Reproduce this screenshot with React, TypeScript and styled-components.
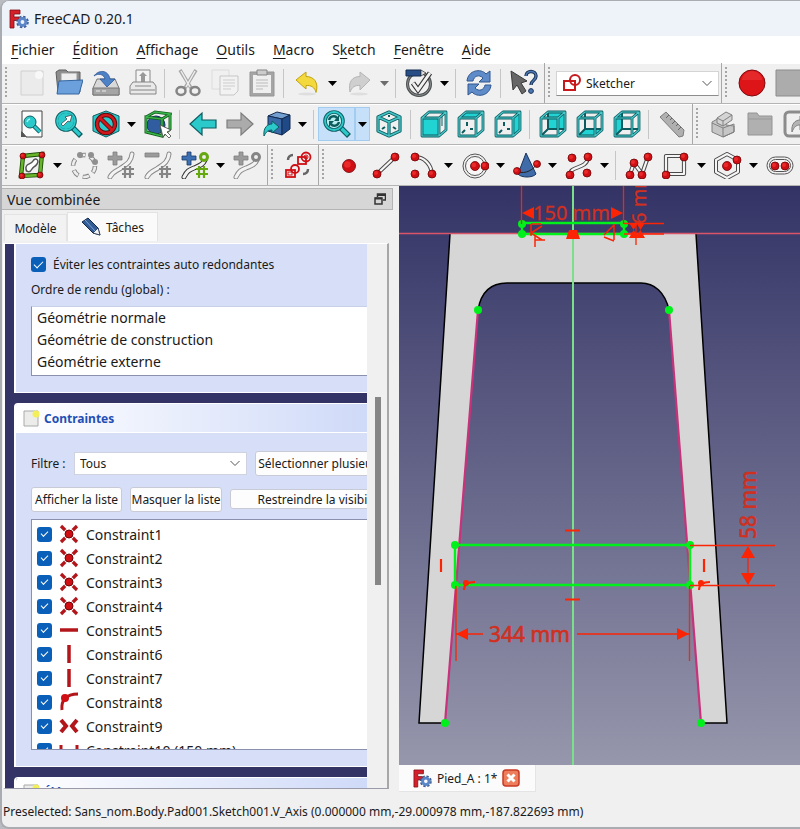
import React from "react";
import styled, { createGlobalStyle } from "styled-components";

const GlobalStyle = createGlobalStyle`
  * { box-sizing: border-box; }
  body { margin: 0; background: #b9bcc0; }
  body, button, select, input { font-family: "Noto Sans", "Open Sans", sans-serif; color: #1a1a1a; }
  button { cursor: default; }
`;

const Window = styled.div`
  display: flex;
  flex-direction: column;
  height: 100vh;
  overflow: hidden;
  background: #f0f0f0;
  border: solid #a9acb0;
  border-width: 1px 0 2px 2px;
  border-radius: 9px 0 0 9px;
`;

const TitleBar = styled.header`
  display: flex;
  align-items: center;
  gap: 5px;
  height: 35px;
  flex: none;
  padding-left: 7px;
  background: #eef3fa;
`;

const TitleText = styled.h1`
  margin: 0;
  font-size: 14px;
  font-weight: 400;
`;

const MenuBar = styled.nav`
  display: flex;
  align-items: center;
  height: 27px;
  flex: none;
  background: #fff;
`;

const MenuButton = styled.button`
  border: 0;
  background: none;
  padding: 0 9px;
  font-size: 14px;
  line-height: 26px;
  white-space: nowrap;
`;

const Mnemonic = styled.span`
  text-decoration: underline;
  text-decoration-skip-ink: none;
  text-underline-offset: 3px;
`;

const ToolRow = styled.div`
  display: flex;
  flex: none;
  height: 41px;
  overflow: hidden;
  border-bottom: 1px solid #b4b4b4;
  box-shadow: inset 0 1px #fff;
`;

const ToolBar = styled.div`
  display: flex;
  flex: none;
  align-items: center;
  padding: 0 2px 0 3px;
  & + & { border-left: 1px solid #a8a8a8; }
`;

const Grip = styled.span`
  flex: none;
  width: 3px;
  height: 32px;
  margin-right: 5px;
  background: radial-gradient(circle at 1px 1px, #a5a5a5 1px, transparent 1px) 0 0 / 3px 4px;
`;

const Separator = styled.span`
  flex: none;
  width: 1px;
  height: 29px;
  margin: 0 4px 0 3px;
  background: #c6c6c6;
`;

const ToolButton = styled.button<{ $on?: boolean }>`
  display: grid;
  place-items: center;
  flex: none;
  width: 37px;
  height: 34px;
  padding: 0;
  border: 1px solid ${(p) => (p.$on ? "#a3cdf0" : "transparent")};
  background: ${(p) => (p.$on ? "#c5e0f8" : "none")};
`;

const CaretButton = styled(ToolButton)`
  width: 15px;
`;

const Svg = styled.svg<{ $size?: number }>`
  display: block;
  flex: none;
  width: ${(p) => p.$size ?? 28}px;
  height: ${(p) => p.$size ?? 28}px;
`;

const WorkbenchBox = styled.label`
  display: flex;
  align-items: center;
  gap: 4px;
  width: 163px;
  height: 25px;
  padding: 0 5px;
  background: #fff;
  border: 1px solid #d4d4d4;
  border-bottom-color: #8d8d8d;
`;

const BareSelect = styled.select`
  flex: 1;
  min-width: 0;
  appearance: none;
  border: 0;
  background: transparent;
  padding: 0;
  font-size: 12px;
`;

const Main = styled.main`
  display: flex;
  flex: 1;
  min-height: 0;
`;

const Dock = styled.aside`
  display: flex;
  flex-direction: column;
  flex: none;
  width: 397px;
  padding: 2px 6px 10px 0;
  min-height: 0;
`;

const DockTitle = styled.div`
  display: flex;
  align-items: center;
  justify-content: space-between;
  flex: none;
  height: 22px;
  padding: 0 6px 0 5px;
  background: #d6d6d6;
  border: 1px solid #b4b4b4;
  border-left: 0;
`;

const DockName = styled.h2`
  margin: 0;
  font-size: 14px;
  font-weight: 400;
`;

const PlainButton = styled.button`
  display: grid;
  padding: 0;
  border: 0;
  background: none;
`;

const Tabs = styled.div`
  display: flex;
  align-items: flex-end;
  flex: none;
  height: 33px;
  padding: 0 0 2px 2px;
`;

const Tab = styled.button<{ $active?: boolean }>`
  display: flex;
  align-items: center;
  justify-content: center;
  gap: 5px;
  width: ${(p) => (p.$active ? 91 : 63)}px;
  height: ${(p) => (p.$active ? 29 : 27)}px;
  padding: 0;
  border: 1px solid #e3e3e3;
  border-bottom: 0;
  background: ${(p) => (p.$active ? "#fafafa" : "#f2f2f2")};
  font-size: 12px;
`;

const TaskArea = styled.div`
  display: flex;
  flex: 1;
  min-height: 0;
  margin: 0 4px 0 1px;
  border: solid #fff;
  border-width: 1px 0 0 2px;
  border-right: 2px solid #a7a7a7;
  border-bottom: 1px solid #9a9aa8;
  overflow: hidden;
`;

const TaskView = styled.div`
  flex: 1;
  min-width: 0;
  overflow: hidden;
  padding-left: 9px;
  background: #333366;
`;

const ScrollTrack = styled.div`
  flex: none;
  width: 20px;
  padding: 153px 6px 0 8px;
  background: #f0f0f0;
`;

const ScrollThumb = styled.div`
  height: 188px;
  background: #868686;
`;

const Group = styled.section<{ $rest?: boolean }>`
  width: 420px;
  margin-bottom: 10px;
  border: 1px solid #fff;
  border-left-width: 2px;
  background: #d6dff7;
  border-radius: ${(p) => (p.$rest ? "0" : "4px 4px 0 0")};
  border-top-width: ${(p) => (p.$rest ? 0 : 1)}px;
  overflow: hidden;
`;

const GroupHead = styled.h3`
  display: flex;
  align-items: center;
  gap: 4px;
  height: 29px;
  margin: 0;
  padding-left: 7px;
  border-bottom: 1px solid #fff;
  background: linear-gradient(90deg, #fff, #c6d3f7);
  color: #1f4fb5;
  font-size: 12px;
  font-weight: 700;
`;

const RenderBody = styled.div`
  padding: 12px 0 16px 15px;
`;

const CheckRow = styled.label`
  display: flex;
  align-items: center;
  gap: 7px;
  height: 17px;
  font-size: 12px;
`;

const Check = styled.input<{ $small?: boolean }>`
  appearance: none;
  display: grid;
  place-items: center;
  flex: none;
  width: 15px;
  height: 15px;
  margin: 0;
  border-radius: 3px;
  background: #0a5fb9;
  &:checked::after {
    content: "";
    width: ${(p) => (p.$small ? 6 : 8)}px;
    height: ${(p) => (p.$small ? 3 : 4)}px;
    border: solid #fff;
    border-width: 0 0 1px 1px;
    transform: translateY(-1px) rotate(-45deg);
  }
`;

const Caption = styled.div`
  margin-top: 8px;
  font-size: 12px;
  line-height: 17px;
`;

const ListFrame = styled.ul`
  list-style: none;
  margin: 8px 0 0;
  padding: 0 0 0 5px;
  background: #fff;
  border: 1px solid #8b90ad;
  font-size: 14px;
`;

const OrderList = styled(ListFrame)`
  height: 70px;
  border-top-color: #c9cfe6;
`;

const OrderItem = styled.li`
  line-height: 22px;
`;

const ConstraintList = styled(ListFrame)`
  height: 231px;
  padding-top: 2px;
  overflow: hidden;
`;

const ConstraintItem = styled.li`
  height: 24px;
`;

const ConstraintLabel = styled.label`
  display: flex;
  align-items: center;
  gap: 7px;
  height: 24px;
`;

const ConstraintBody = styled.div`
  padding: 18px 0 16px 15px;
`;

const FormRow = styled.div`
  display: flex;
  align-items: center;
  gap: 8px;
  height: 24px;
  & + & { margin-top: 12px; }
`;

const FilterLabel = styled.label`
  width: 35px;
  font-size: 12px;
  white-space: nowrap;
`;

const FilterBox = styled.span`
  display: flex;
  align-items: center;
  flex: none;
  width: 173px;
  height: 23px;
  padding: 0 5px;
  background: #fff;
  border: 1px solid #cfd3e0;
`;

const PushButton = styled.button<{ $width: number; $low?: boolean }>`
  flex: none;
  width: ${(p) => p.$width}px;
  height: ${(p) => (p.$low ? 20 : 25)}px;
  padding: 0;
  border: 1px solid #c8cbd6;
  border-radius: 3px;
  background: #fdfdfd;
  font-size: 12px;
  line-height: 17px;
  white-space: nowrap;
`;

const ViewColumn = styled.section`
  display: flex;
  flex-direction: column;
  flex: 1;
  min-width: 0;
`;

const Viewport = styled.div`
  flex: 1;
  min-height: 0;
  overflow: hidden;
  background: linear-gradient(#333366, #9696ac);
`;

const Drawing = styled.svg`
  display: block;
  width: 100%;
  height: 100%;
  font-family: "Noto Sans", sans-serif;
`;

const DocTabs = styled.div`
  display: flex;
  flex: none;
  height: 34px;
`;

const DocTab = styled.div`
  display: flex;
  align-items: center;
  gap: 5px;
  width: 137px;
  height: 27px;
  padding-left: 14px;
  background: #fbfbfb;
  border: solid #e4e4e4;
  border-width: 0 1px 1px 0;
  font-size: 12px;
`;

const StatusBar = styled.footer`
  flex: none;
  height: 28px;
  padding-left: 1px;
  font-size: 12px;
  line-height: 26px;
  white-space: nowrap;
`;

/* ---------- icons ---------- */

const TEAL = "#2cc9cb";
const DTEAL = "#0d5c60";
const RED = "#cf0f14";

const Icon = ({ children, size, box = 28 }: { children: React.ReactNode; size?: number; box?: number }) => (
  <Svg $size={size} viewBox={`0 0 ${box} ${box}`} fill="none" aria-hidden="true">{children}</Svg>
);

const Caret = ({ dim }: { dim?: boolean }) => (
  <Icon size={9} box={9}><path d="M0 2h9L4.500 7z" fill={dim ? "#6d6d6d" : "#000"} /></Icon>
);

const Chevron = () => (
  <Icon size={12} box={12}><path d="M1.500 4l4.500 4.500L10.500 4" stroke="#555" /></Icon>
);

const Dot = ({ x, y, r = 4 }: { x: number; y: number; r?: number }) => (
  <g>
    <circle cx={x} cy={y} r={r} fill={RED} stroke="#6d0508" strokeWidth=".8" />
    <circle cx={x - r / 4} cy={y - r / 4} r={r / 2} fill="#ea2a2a" />
  </g>
);

const Rail = ({ d, w = 4.2 }: { d: string; w?: number }) => (
  <g strokeLinecap="round" strokeLinejoin="round">
    <path d={d} stroke="#4a4a4a" strokeWidth={w} />
    <path d={d} stroke="#f5f5f5" strokeWidth={w - 2} />
  </g>
);

const Logo = ({ size }: { size: number }) => (
  <Icon size={size} box={20}>
    <path d="M1 1h10v4H5v3h5v3.500H5V19H1z" fill="#d5202a" stroke="#7c0c12" strokeWidth=".8" />
    <circle cx="13.500" cy="13" r="4.800" stroke="#3d5f96" strokeWidth="3" strokeDasharray="2.200 1.570" />
    <circle cx="13.500" cy="13" r="3.400" stroke="#5b86c7" strokeWidth="3" />
  </Icon>
);

const NewIcon = () => (
  <Icon><path d="M3 2h22v24H3z" fill="#ebebeb" stroke="#d0d0d0" /><circle cx="21" cy="6" r="4" fill="#f8f8f8" /></Icon>
);
const OpenIcon = () => (
  <Icon>
    <path d="M1 3l3-2h7l2 2h12v20H3z" fill="#8c8c8c" stroke="#5e5e5e" />
    <path d="M6 4h16v9H6z" fill="#eee" stroke="#999" />
    <path d="M4 12l24-1-4 14H2z" fill="#6ca0dc" stroke="#34659f" />
  </Icon>
);
const SaveIcon = () => (
  <Icon>
    <path d="M5 10h18l4 9v7H1v-7z" fill="#d9d9d9" stroke="#777" />
    <path d="M1 19h26v7H1z" fill="#a5a5a5" stroke="#777" />
    <path d="M4 22h4m2 0h4" stroke="#eee" />
    <path d="M2 7c4-6 14-7 16 3h5l-8 8-7-8h5C12 5 6 4 2 7z" fill="#4e82c6" stroke="#2c5796" strokeWidth=".8" />
  </Icon>
);
const PrintIcon = () => (
  <Icon>
    <path d="M7 1h14v13H7z" fill="#f4f4f4" stroke="#8a8a8a" />
    <path d="M14 3l4 4h-2v6h-4V7h-2z" fill="#999" />
    <path d="M4 13h20l3 4v8H1v-8z" fill="#e9e9e9" stroke="#858585" />
    <path d="M2 21h24M6 17h16" stroke="#858585" />
  </Icon>
);
const CutIcon = () => (
  <Icon>
    <path d="M6 1l11 18M22 1L11 19" stroke="#a8a8a8" strokeWidth="3.500" />
    <path d="M7 2l9 16M21 2l-9 16" stroke="#ededed" strokeWidth="1.500" />
    <ellipse cx="7" cy="22" rx="4.500" ry="4" stroke="#858585" strokeWidth="2.500" />
    <ellipse cx="21" cy="22" rx="4.500" ry="4" stroke="#858585" strokeWidth="2.500" />
  </Icon>
);
const CopyIcon = () => (
  <Icon>
    <path d="M1 1h17v19H1z" fill="#f0f0f0" stroke="#dcdcdc" />
    <path d="M9 7h18v15l-4 4H9z" fill="#f2f2f2" stroke="#c6c6c6" />
    <path d="M12 11h12m-12 3h12m-12 3h12m-12 3h8" stroke="#cdcdcd" />
  </Icon>
);
const PasteIcon = () => (
  <Icon>
    <path d="M2 3h24v24H2z" fill="#a5a5a5" stroke="#959595" />
    <path d="M5 6h18v18H5z" fill="#efefef" />
    <path d="M9 1h10v5H9z" fill="#ccc" stroke="#858585" />
    <path d="M8 11h12M8 14h12M8 17h12M8 20h7" stroke="#bbb" />
  </Icon>
);
const UndoIcon = ({ redo }: { redo?: boolean }) => (
  <Icon>
    <path
      d={redo ? "M25 11L15 3v4.500C7 7.500 3 13 5 23c2-5 5-7 10-6.500V21z" : "M3 11l10-8v4.500c8 0 13 6 10 16-1-5-5-7.500-10-7V20z"}
      fill={redo ? "#cfcfcf" : "#f4d93e"} stroke={redo ? "#b5b5b5" : "#c2a20c"}
    />
    <ellipse cx="14" cy="25" rx="9" ry="1.500" fill="#dedede" />
  </Icon>
);
const ValidateIcon = () => (
  <Icon>
    <circle cx="14" cy="15" r="11.500" stroke="#4b4f50" strokeWidth="3" />
    <circle cx="14" cy="15" r="11.500" stroke="#8c9192" strokeWidth="1" />
    <path d="M1 1h15v6H1z" fill="#274f86" stroke="#122c50" />
    <path d="M16 1l5 3-5 3z" fill="#ddd" stroke="#333" strokeWidth=".7" />
    <path d="M8 14l5 7L25 4" stroke="#333" strokeWidth="5" />
    <path d="M8 14l5 7L25 4" stroke="#f1f1f1" strokeWidth="3" />
  </Icon>
);
const RefreshIcon = () => (
  <Icon>
    <path d="M2 12C3 1 16-1 21 5l4-3v11H14l4-4c-4-4-9-2-10 3z" fill="#5f8cc9" stroke="#2f5790" />
    <path d="M26 16C25 27 12 29 7 23l-4 3V15h11l-4 4c4 4 9 2 10-3z" fill="#5f8cc9" stroke="#2f5790" />
  </Icon>
);
const WhatsIcon = () => (
  <Icon>
    <path d="M1 2l16 10-6 2 5 8-4 3-5-9-4 5z" fill="#666" stroke="#3b3b3b" />
    <path d="M16 7c0-6 10-6 10 0 0 5-5 4-5 9" stroke="#1d3557" strokeWidth="3.500" />
    <path d="M16 7c0-6 10-6 10 0 0 5-5 4-5 9" stroke="#4a78b5" strokeWidth="1.500" />
    <circle cx="21" cy="22" r="2.400" fill="#4a78b5" stroke="#1d3557" />
  </Icon>
);
const SketcherIcon = () => (
  <Icon size={20} box={20}>
    <rect x="2" y="8" width="11" height="9" stroke="#c8181c" strokeWidth="2" />
    <circle cx="13" cy="7" r="5" stroke="#c8181c" strokeWidth="2" />
  </Icon>
);
const RecordIcon = () => (
  <Icon><circle cx="14" cy="14" r="13" fill="#dd1519" stroke="#7e0b0e" /><path d="M4 11a10 9 0 0120 0" fill="#ee3b3b" opacity=".5" /></Icon>
);
const StopIcon = () => <Icon><path d="M1 1h26v26H1z" fill="#acacac" stroke="#8c8c8c" /></Icon>;

const FitAllIcon = () => (
  <Icon>
    <path d="M4 1h20v26H8l-4-5z" fill="#fbfbfb" stroke="#444" />
    <path d="M3 21l6 6H3z" fill="#555" />
    <path d="M15 15l7 7" stroke={DTEAL} strokeWidth="4.500" />
    <path d="M15 15l7 7" stroke={TEAL} strokeWidth="2.500" />
    <circle cx="12" cy="12" r="6" fill={TEAL} stroke={DTEAL} />
    <path d="M9 12a4 4 0 013-3" stroke="#a5f1f1" strokeWidth="1.500" />
  </Icon>
);
const Magnifier = ({ children }: { children: React.ReactNode }) => (
  <Icon>
    <path d="M17 17l9 9" stroke={DTEAL} strokeWidth="5.500" />
    <path d="M17 17l8 8" stroke={TEAL} strokeWidth="3.200" />
    <circle cx="11" cy="11" r="9" fill="#b9eeee" stroke={DTEAL} strokeWidth="3.600" />
    <circle cx="11" cy="11" r="9" stroke={TEAL} strokeWidth="1.800" />
    {children}
  </Icon>
);
const FitSelIcon = () => (
  <Magnifier>
    <circle cx="11" cy="11" r="8" fill={TEAL} />
    <path d="M6 14l6-5-2-2 7-2-2 7-2-1-5 5z" fill="#fff" stroke="#333" strokeWidth=".7" />
  </Magnifier>
);
const SyncIcon = () => (
  <Magnifier>
    <path d="M6 10c1-4 6-5 8-2M16 12c-1 4-6 5-8 2" stroke={DTEAL} strokeWidth="2.400" />
    <path d="M16 5v6h-5zM6 17v-6h5z" fill={DTEAL} />
  </Magnifier>
);
const StyleIcon = () => (
  <Icon>
    <path d="M14 1l13 5v15l-13 6-13-6V6z" fill={TEAL} stroke={DTEAL} />
    <circle cx="14" cy="14" r="9" stroke="#5d0a0c" strokeWidth="4.400" />
    <path d="M8 8l12 12" stroke="#5d0a0c" strokeWidth="4.400" />
    <circle cx="14" cy="14" r="9" stroke="#d0181c" strokeWidth="2.600" />
    <path d="M8 8l12 12" stroke="#d0181c" strokeWidth="2.600" />
  </Icon>
);
const BoxSelectIcon = () => (
  <Icon>
    <circle cx="12" cy="15" r="9" fill="#2f5da0" stroke="#12305c" />
    <g stroke="#145c1d" strokeWidth="3"><path d="M2 7l16 2v17L2 22zM2 7l9-5 15 2-8 5M26 4v15l-8 7" /></g>
    <g stroke="#38b54a" strokeWidth="1.400"><path d="M2 7l16 2v17L2 22zM2 7l9-5 15 2-8 5M26 4v15l-8 7" /></g>
    <path d="M16 15l11 5-4 2 4 4-2 2-4-4-2 3z" fill="#fff" stroke="#444" strokeWidth=".8" />
  </Icon>
);
const ArrowIcon = ({ right }: { right?: boolean }) => (
  <Icon>
    <path
      d={right ? "M27 14L15 3v7H1v8h14v7z" : "M1 14L13 3v7h14v8H13v7z"}
      fill={right ? "#ababab" : TEAL} stroke={right ? "#7d7d7d" : DTEAL} strokeWidth="1.200"
    />
  </Icon>
);
const LinkIcon = () => (
  <Icon>
    <path d="M5 6l9-4 13 3-8 4z" fill="#729fcf" stroke="#12284c" />
    <path d="M5 6l14 3v16L5 21z" fill="#3a69a8" stroke="#12284c" />
    <path d="M19 9l8-4v14l-8 6z" fill="#204a87" stroke="#12284c" />
    <path d="M1 26c-1-9 4-12 8-12v-3l7 6-7 6v-3c-4 0-6 2-8 6z" fill={TEAL} stroke={DTEAL} />
  </Icon>
);
const IsoIcon = () => {
  const d = "M14 2l11 5v14l-11 5L3 21V7zM3 7l11 5 11-5M14 12v14";
  return (
    <Icon>
      <path d={d} stroke={DTEAL} strokeWidth="3.200" strokeLinejoin="round" />
      <path d={d} stroke="#45c4c6" strokeWidth="1.400" strokeLinejoin="round" />
      <path d="M7 19l3-2m8 0l3 2M14 5v2" stroke={DTEAL} strokeWidth="2" />
    </Icon>
  );
};

type Face = "front" | "top" | "right" | "rear" | "bottom" | "left";
const FACES: Record<Face, string> = {
  front: "M2 8h17v18H2z",
  top: "M2 8l7-6h17l-7 6z",
  right: "M19 8l7-6v18l-7 6z",
  rear: "M9 2h17v17H9z",
  bottom: "M2 26l7-7h17l-7 7z",
  left: "M2 8l7-6v17l-7 7z",
};
const CubeIcon = ({ face }: { face: Face }) => {
  const outer = "M2 8h17v18H2zM2 8l7-6h17l-7 6M26 2v18l-7 6";
  const hidden = face === "rear" || face === "bottom" || face === "left";
  const inner = hidden ? "M9 2v17h17M9 19l-7 7" : "M10 12v4M13 19h3M8 20l-3 3";
  return (
    <Icon>
      <path d={FACES[face]} fill="#22d3d3" />
      {face !== "front" && <path d={inner} stroke={DTEAL} strokeWidth="2" />}
      {face === "front" && <path d="M22 6v10" stroke={DTEAL} strokeWidth="1" />}
      <path d={outer} stroke={DTEAL} strokeWidth="2.800" strokeLinejoin="round" />
      <path d={outer} stroke="#49c9cb" strokeWidth="1.200" strokeLinejoin="round" />
    </Icon>
  );
};
const RulerIcon = () => (
  <Icon><path d="M2 7l6-5 18 18-1 6-4 1z" fill="#b0b0b0" stroke="#7c7c7c" /><path d="M11 5l-3 3m6 0l-2 2m5 1l-3 3m6 0l-2 2m5 1l-3 3" stroke="#666" /></Icon>
);
const PartIcon = () => (
  <Icon>
    <path d="M3 12l9-5 5 3v5l8 1v6l-11 5-11-5z" fill="#c6c6c6" stroke="#808080" />
    <path d="M8 8l9-6 6 3v5l-9 6-6-3z" fill="#d4d4d4" stroke="#808080" />
    <path d="M8 8l6 3 9-6M14 11v5M3 13l11 5v9M14 18l11-4v8l-11 5" fill="none" stroke="#808080" />
  </Icon>
);
const FolderIcon = () => <Icon><path d="M2 3h9l2 3h13v19H2z" fill="#b0b0b0" stroke="#949494" /><path d="M2 9h24" stroke="#999" /></Icon>;
const ChainIcon = () => (
  <Icon><rect x="2" y="2" width="24" height="24" rx="4" stroke="#8c8c8c" strokeWidth="3" /><path d="M9 22c-1-8 3-12 8-12V6l9 7-9 7v-5c-4 0-6 2-8 7z" fill="#b4b4b4" stroke="#808080" /></Icon>
);

const EditSketchIcon = () => (
  <Icon>
    <path d="M5 5L24 3l-2 21-19 1z" stroke="#1d4d08" strokeWidth="4.400" />
    <path d="M5 5L24 3l-2 21-19 1z" stroke="#67b529" strokeWidth="2.600" />
    <path d="M8 18c-1-6 5-4 7-8 2-4 7-1 4 3-2 3-4 3-5 5-2 4-6 3-6 0z" stroke="#555" strokeWidth="1.500" fill="#fff" />
    <Dot x={5} y={5} r={3} /><Dot x={24} y={4} r={3} /><Dot x={22} y={24} r={3} /><Dot x={4} y={25} r={3} />
  </Icon>
);
const SplineRingIcon = () => (
  <Icon>
    <circle cx="14" cy="15" r="11" stroke="#858585" strokeWidth="4.600" strokeDasharray="7 4.520" />
    <circle cx="14" cy="15" r="11" stroke="#eee" strokeWidth="2.600" strokeDasharray="6 5.520" strokeDashoffset="-.5" />
    <circle cx="10" cy="4" r="3" fill="#8f8f8f" /><circle cx="21" cy="4" r="3" fill="#8f8f8f" /><circle cx="25" cy="11" r="3" fill="#8f8f8f" />
  </Icon>
);
const SplineToolIcon = ({ sign, color, knot, hash = true }: { sign: "+" | "-"; color?: boolean; knot?: boolean; hash?: boolean }) => {
  const main = color ? "#3d70b2" : "#9b9b9b";
  const h = color ? "#66a80f" : "#858585";
  const line = knot ? "M3 26c3-6 5-7 10-9s9-3 11-8" : "M3 26c3-6 7-6 11-9s10-5 11-14";
  return (
    <Icon>
      <path d={line} stroke={color ? "#333" : "#8a8a8a"} strokeWidth="5" strokeLinecap="round" />
      <path d={line} stroke="#f3f3f3" strokeWidth="3" strokeLinecap="round" />
      <path d={sign === "+" ? "M6 1h4v4h5v4h-5v5H6V9H1V5h5z" : "M1 2h14v4H1z"} fill={main} stroke={color ? "#1a3866" : "#7d7d7d"} strokeWidth=".8" />
      {hash && <path d="M18 15v12m5-12v12m-8-9h12m-12 5h12" stroke={h} strokeWidth="2.200" />}
      {knot && <circle cx="23" cy="6" r="3.500" fill="#eee" stroke={h} strokeWidth="3" />}
    </Icon>
  );
};
const SwapGeometryIcon = () => (
  <Icon>
    <g stroke={RED} strokeWidth="1.800">
      <rect x="14" y="6" width="8" height="7" /><circle cx="22" cy="6" r="4.500" /><circle cx="22" cy="6" r="2" strokeWidth="1" />
      <rect x="2" y="19" width="9" height="7" /><circle cx="11" cy="18" r="4" /><rect x="4" y="21" width="4" height="3" strokeWidth="1" />
    </g>
    <path d="M4 9c0-3 2-5 5-5M24 18c0 3-2 5-5 5" stroke="#666" strokeWidth="2.500" />
  </Icon>
);
const PointIcon = () => <Icon><Dot x={14} y={15} r={6.500} /></Icon>;
const LineIcon = () => <Icon><Rail d="M5 23L23 6" /><Dot x={5} y={23} /><Dot x={23} y={6} /></Icon>;
const ArcIcon = () => <Icon><Rail d="M6 6c9 0 16 7 17 17" /><Dot x={6} y={6} /><Dot x={6} y={23} /><Dot x={23} y={23} /></Icon>;
const CircleIcon = () => <Icon><circle cx="14" cy="15" r="12" stroke="#555" /><circle cx="14" cy="15" r="9.500" fill="#f6f6f6" stroke="#555" /><Dot x={14} y={15} r={4.500} /><Dot x={24} y={15} r={4} /></Icon>;
const ConicIcon = () => (
  <Icon>
    <path d="M13 2L5 23c3 4 15 4 18 0z" fill="#3f6ca8" stroke="#18345f" />
    <path d="M4 20c4 3 14 2 20-7" stroke="#222" />
    <Dot x={4} y={20} r={3.500} /><Dot x={24} y={13} r={3.500} />
  </Icon>
);
const BSplineIcon = () => <Icon><Rail d="M5 24c0-10 16-5 18-17" /><Dot x={7} y={7} /><Dot x={23} y={6} /><Dot x={5} y={24} /><Dot x={22} y={22} /></Icon>;
const PolylineIcon = () => <Icon><Rail d="M5 23L9 12l8 11 6-17" /><Dot x={5} y={24} /><Dot x={9} y={12} /><Dot x={17} y={24} /><Dot x={23} y={6} /></Icon>;
const RectIcon = () => <Icon><Rail d="M4 5h18v18H4z" /><Dot x={22} y={6} /><Dot x={4} y={24} /></Icon>;
const HexIcon = () => <Icon><Rail d="M13 3l11 6v12l-11 6-11-6V9z" w={4} /><Dot x={13} y={15} r={4.500} /><Dot x={23} y={9} /></Icon>;
const SlotIcon = () => <Icon><rect x="1" y="6" width="26" height="17" rx="8.500" stroke="#555" /><rect x="3.500" y="8.500" width="21" height="12" rx="6" fill="#f3f3f3" stroke="#555" /><Dot x={9} y={15} /><Dot x={19} y={15} /></Icon>;

const FloatIcon = () => (
  <Icon size={12} box={12}><path d="M3.500 4V1h8v6H9" stroke="#333" strokeWidth="1.500" /><path d="M1 5h7v6H1z" stroke="#333" strokeWidth="1.500" /><path d="M3 2h8M1 5.500h7" stroke="#333" strokeWidth="2" /></Icon>
);
const PencilIcon = () => (
  <Icon size={20} box={20}><path d="M1 5l6-4 10 10 2 7-7-2z" fill="#315c96" stroke="#14294a" /><path d="M4 3l10 11" stroke="#7ba3d4" /><path d="M12 16l5-5 2 7z" fill="#f3f3f3" stroke="#14294a" strokeWidth=".7" /></Icon>
);
const SheetIcon = () => (
  <Icon size={17} box={17}><path d="M1 1h14v15H1z" fill="#ececea" stroke="#aaa" /><circle cx="13" cy="4" r="3.500" fill="#f3ef58" /></Icon>
);
const CloseIcon = () => (
  <Icon size={18} box={18}><rect x="1" y="1" width="16" height="16" rx="3" fill="#ee7d5c" stroke="#c73a26" strokeWidth="1.500" /><path d="M5.500 5.500l7 7m0-7l-7 7" stroke="#fff" strokeWidth="3" /></Icon>
);

type Kind = "coincident" | "horizontal" | "vertical" | "tangent" | "symmetric" | "distance";
const ConstraintIcon = ({ kind }: { kind: Kind }) => (
  <Icon size={20} box={20}>
    {kind === "coincident" && (
      <><path d="M2 2l16 16M18 2L2 18" stroke="#b3161a" strokeWidth="3.200" /><circle cx="10" cy="10" r="5.500" fill="#fff" /><circle cx="10" cy="10" r="4" fill={RED} stroke="#6d0508" /></>
    )}
    {kind === "horizontal" && <path d="M1 10h18" stroke="#b3161a" strokeWidth="3.500" />}
    {kind === "vertical" && <path d="M10 1v18" stroke="#b3161a" strokeWidth="3.500" />}
    {kind === "tangent" && <><path d="M3 18C2 8 7 2 19 2" stroke="#b3161a" strokeWidth="3" /><circle cx="6" cy="6" r="4" fill={RED} /></>}
    {kind === "symmetric" && <path d="M2 4l5 6-5 6M18 4l-5 6 5 6" stroke="#b3161a" strokeWidth="4" />}
    {kind === "distance" && <path d="M2 5v14M18 5v14M3 12h14" stroke="#b3161a" strokeWidth="3" />}
  </Icon>
);

/* ---------- toolbars ---------- */

const Tool = ({ name, children, disabled, on }: { name: string; children: React.ReactNode; disabled?: boolean; on?: boolean }) => (
  <ToolButton aria-label={name} disabled={disabled} $on={on}>{children}</ToolButton>
);
const More = ({ name, dim, on }: { name: string; dim?: boolean; on?: boolean }) => (
  <CaretButton aria-label={name} disabled={dim} $on={on}><Caret dim={dim} /></CaretButton>
);

/* "&" precedes the letter that serves as the keyboard mnemonic */
const MENUS = ["&Fichier", "&Édition", "&Affichage", "&Outils", "&Macro", "S&ketch", "&Fenêtre", "&Aide"];

const MenuItem = ({ text }: { text: string }) => {
  const [before, after] = text.split("&");
  return <MenuButton>{before}<Mnemonic>{after[0]}</Mnemonic>{after.slice(1)}</MenuButton>;
};

const CONSTRAINTS: { name: string; kind: Kind }[] = [
  { name: "Constraint1", kind: "coincident" },
  { name: "Constraint2", kind: "coincident" },
  { name: "Constraint3", kind: "coincident" },
  { name: "Constraint4", kind: "coincident" },
  { name: "Constraint5", kind: "horizontal" },
  { name: "Constraint6", kind: "vertical" },
  { name: "Constraint7", kind: "vertical" },
  { name: "Constraint8", kind: "tangent" },
  { name: "Constraint9", kind: "symmetric" },
  { name: "Constraint10 (150 mm)", kind: "distance" },
];

const Toolbars = () => (
  <>
    <ToolRow>
      <ToolBar>
        <Grip />
        <Tool name="Nouveau" disabled><NewIcon /></Tool>
        <Tool name="Ouvrir"><OpenIcon /></Tool>
        <Tool name="Enregistrer"><SaveIcon /></Tool>
        <Tool name="Imprimer"><PrintIcon /></Tool>
        <Separator />
        <Tool name="Couper" disabled><CutIcon /></Tool>
        <Tool name="Copier" disabled><CopyIcon /></Tool>
        <Tool name="Coller" disabled><PasteIcon /></Tool>
        <Separator />
        <Tool name="Annuler"><UndoIcon /></Tool>
        <More name="Historique d'annulation" />
        <Tool name="Rétablir" disabled><UndoIcon redo /></Tool>
        <More name="Historique de rétablissement" dim />
        <Separator />
        <Tool name="Valider"><ValidateIcon /></Tool>
        <More name="Options de validation" />
        <Separator />
        <Tool name="Actualiser"><RefreshIcon /></Tool>
        <Separator />
        <Tool name="Qu'est-ce que c'est ?"><WhatsIcon /></Tool>
      </ToolBar>
      <ToolBar>
        <Grip />
        <WorkbenchBox>
          <SketcherIcon />
          <BareSelect aria-label="Atelier"><option>Sketcher</option></BareSelect>
          <Chevron />
        </WorkbenchBox>
      </ToolBar>
      <ToolBar>
        <Grip />
        <Tool name="Enregistrer une macro"><RecordIcon /></Tool>
        <Tool name="Arrêter" disabled><StopIcon /></Tool>
      </ToolBar>
    </ToolRow>
    <ToolRow>
      <ToolBar>
        <Grip />
        <Tool name="Tout afficher"><FitAllIcon /></Tool>
        <Tool name="Afficher la sélection"><FitSelIcon /></Tool>
        <Tool name="Style de représentation"><StyleIcon /></Tool>
        <More name="Styles" />
        <Tool name="Boîte englobante"><BoxSelectIcon /></Tool>
        <Separator />
        <Tool name="Précédent"><ArrowIcon /></Tool>
        <Tool name="Suivant" disabled><ArrowIcon right /></Tool>
        <Tool name="Aller à l'objet lié"><LinkIcon /></Tool>
        <More name="Objets liés" />
        <Separator />
        <Tool name="Synchroniser la vue" on><SyncIcon /></Tool>
        <More name="Options de vue" on />
        <Tool name="Isométrique"><IsoIcon /></Tool>
        <Separator />
        <Tool name="Face"><CubeIcon face="front" /></Tool>
        <Tool name="Dessus"><CubeIcon face="top" /></Tool>
        <Tool name="Droite"><CubeIcon face="right" /></Tool>
        <Separator />
        <Tool name="Arrière"><CubeIcon face="rear" /></Tool>
        <Tool name="Dessous"><CubeIcon face="bottom" /></Tool>
        <Tool name="Gauche"><CubeIcon face="left" /></Tool>
        <Separator />
        <Tool name="Mesurer" disabled><RulerIcon /></Tool>
      </ToolBar>
      <ToolBar>
        <Grip />
        <Tool name="Créer une pièce" disabled><PartIcon /></Tool>
        <Tool name="Créer un groupe" disabled><FolderIcon /></Tool>
        <Tool name="Créer un lien" disabled><ChainIcon /></Tool>
      </ToolBar>
    </ToolRow>
    <ToolRow>
      <ToolBar>
        <Grip />
        <Tool name="Esquisse"><EditSketchIcon /></Tool>
        <More name="Options d'esquisse" />
        <Tool name="Convertir en B-spline" disabled><SplineRingIcon /></Tool>
        <Tool name="Augmenter le degré" disabled><SplineToolIcon sign="+" /></Tool>
        <Tool name="Diminuer le degré" disabled><SplineToolIcon sign="-" /></Tool>
        <Tool name="Multiplicité"><SplineToolIcon sign="+" color knot /></Tool>
        <More name="Options de multiplicité" />
        <Tool name="Insérer un nœud" disabled><SplineToolIcon sign="+" knot hash={false} /></Tool>
      </ToolBar>
      <ToolBar>
        <Grip />
        <Tool name="Espace virtuel"><SwapGeometryIcon /></Tool>
      </ToolBar>
      <ToolBar>
        <Grip />
        <Tool name="Point"><PointIcon /></Tool>
        <Tool name="Ligne"><LineIcon /></Tool>
        <Tool name="Arc"><ArcIcon /></Tool>
        <More name="Arcs" />
        <Tool name="Cercle"><CircleIcon /></Tool>
        <More name="Cercles" />
        <Tool name="Conique"><ConicIcon /></Tool>
        <More name="Coniques" />
        <Tool name="B-spline"><BSplineIcon /></Tool>
        <More name="B-splines" />
        <Separator />
        <Tool name="Polyligne"><PolylineIcon /></Tool>
        <Tool name="Rectangle"><RectIcon /></Tool>
        <More name="Rectangles" />
        <Tool name="Polygone"><HexIcon /></Tool>
        <More name="Polygones" />
        <Tool name="Rainure"><SlotIcon /></Tool>
      </ToolBar>
    </ToolRow>
  </>
);

const GREEN = "#00f01c";
const CRIMSON = "#c8327a";
const DIM = "#fb2404";

const SketchDrawing = () => (
  <Drawing viewBox="0 0 401 579" preserveAspectRatio="xMinYMin slice" role="img" aria-label="Esquisse du pied">
    <path
      d="M51 48H297L328 537H302L270 124C266 106 255 97 242 97H108C92 97 82 106 79 124L46 537H20z"
      fill="#d6d6d6"
    />
    <path d="M51 48L20 537H46M297 48l31 489h-26M79 124c3-18 13-27 29-27h134c13 0 24 9 28 27" fill="none" stroke="#000" strokeWidth="1.500" />
    <path d="M79 124L46 537M270 124l32 413" stroke={CRIMSON} strokeWidth="2.200" />
    <path d="M0 47.500h401" stroke="#d9566a" strokeWidth="1.500" />
    <path d="M174 0v579" stroke="#7be08a" strokeWidth="2" />

    <path d="M123 37h102v11H123zM56 359h235v40H56z" fill="none" stroke={GREEN} strokeWidth="2.400" />
    <g fill={GREEN}>
      {[[123, 38], [225, 38], [123, 48], [225, 48], [79, 124], [270, 124], [56, 359], [291, 359], [56, 399], [291, 399], [46, 537], [302, 537]].map(([x, y]) => (
        <circle key={`${x}-${y}`} cx={x} cy={y} r="4" />
      ))}
    </g>

    <g stroke={DIM} strokeWidth="1.300" fill="none">
      <path d="M122.500 0v38M224.500 0v38M225 37.500h40M225 48h40M237 35v24" />
      <path d="M57 400v75M290.500 400v75M57 448h27M178 448h112" />
      <path d="M291 359.500h85M291 399.500h85M349 362v36" />
      <path d="M132 38v12M132 38h10M143 54l-11-7 11-7M136 54h10M136 49v12M215 38v16M205 49l10-10M205 51l10 4" strokeWidth="1.500" />
      <path d="M166 344.500h15M166 413.500h15M42 373v13M305 373v13" strokeWidth="2.200" />
      <path d="M65 404c0-5 4-8 11-8M300 404c0-5 4-8 11-8" strokeWidth="2" />
    </g>
    <g fill={DIM}>
      <path d="M123 27l12-6v12zM224 27l-12-6v12zM57 448l12-6v12zM290 448l-12-6v12z" />
      <path d="M349 360l-7 12h14zM349 399l-7-12h14zM238 38l-8 14h16zM238 49l-8-12h16z" />
      <path d="M170 44h8l3 9h-14z" />
      <circle cx="67" cy="397" r="3" /><circle cx="302" cy="397" r="3" />
    </g>
    <g fill="#d0301f" stroke="#d0301f" strokeWidth=".3" fontSize="20">
      <text x="134" y="34">150 mm</text>
      <text x="90" y="456" fontSize="21" strokeWidth=".6">344 mm</text>
      <text transform="translate(357 353) rotate(-90)" fontSize="21" strokeWidth=".6">58 mm</text>
      <text transform="translate(247 38) rotate(-90)">6 mm</text>
    </g>
  </Drawing>
);

const TaskPanel = () => (
  <TaskArea>
    <TaskView>
      <Group $rest>
        <RenderBody>
          <CheckRow><Check type="checkbox" defaultChecked />Éviter les contraintes auto redondantes</CheckRow>
          <Caption>Ordre de rendu (global) :</Caption>
          <OrderList>
            <OrderItem>Géométrie normale</OrderItem>
            <OrderItem>Géométrie de construction</OrderItem>
            <OrderItem>Géométrie externe</OrderItem>
          </OrderList>
        </RenderBody>
      </Group>
      <Group>
        <GroupHead><SheetIcon />Contraintes</GroupHead>
        <ConstraintBody>
          <FormRow>
            <FilterLabel htmlFor="filter">Filtre :</FilterLabel>
            <FilterBox>
              <BareSelect id="filter"><option>Tous</option></BareSelect>
              <Chevron />
            </FilterBox>
            <PushButton $width={141}>Sélectionner plusieurs…</PushButton>
          </FormRow>
          <FormRow>
            <PushButton $width={91}>Afficher la liste</PushButton>
            <PushButton $width={92}>Masquer la liste</PushButton>
            <PushButton $width={182} $low>Restreindre la visibilité</PushButton>
          </FormRow>
          <ConstraintList>
            {CONSTRAINTS.map((c) => (
              <ConstraintItem key={c.name}>
                <ConstraintLabel>
                  <Check type="checkbox" defaultChecked $small />
                  <ConstraintIcon kind={c.kind} />
                  {c.name}
                </ConstraintLabel>
              </ConstraintItem>
            ))}
          </ConstraintList>
        </ConstraintBody>
      </Group>
      <Group>
        <GroupHead><SheetIcon />Éléments</GroupHead>
      </Group>
    </TaskView>
    <ScrollTrack><ScrollThumb /></ScrollTrack>
  </TaskArea>
);

export default function App() {
  return (
    <>
      <GlobalStyle />
      <Window>
        <TitleBar><Logo size={20} /><TitleText>FreeCAD 0.20.1</TitleText></TitleBar>
        <MenuBar>{MENUS.map((m) => <MenuItem key={m} text={m} />)}</MenuBar>
        <Toolbars />
        <Main>
          <Dock>
            <DockTitle>
              <DockName>Vue combinée</DockName>
              <PlainButton aria-label="Détacher"><FloatIcon /></PlainButton>
            </DockTitle>
            <Tabs role="tablist">
              <Tab role="tab">Modèle</Tab>
              <Tab role="tab" aria-selected $active><PencilIcon />Tâches</Tab>
            </Tabs>
            <TaskPanel />
          </Dock>
          <ViewColumn>
            <Viewport><SketchDrawing /></Viewport>
            <DocTabs>
              <DocTab>
                <Logo size={19} />
                Pied_A : 1*
                <PlainButton aria-label="Fermer"><CloseIcon /></PlainButton>
              </DocTab>
            </DocTabs>
          </ViewColumn>
        </Main>
        <StatusBar>Preselected: Sans_nom.Body.Pad001.Sketch001.V_Axis (0.000000 mm,-29.000978 mm,-187.822693 mm)</StatusBar>
      </Window>
    </>
  );
}
